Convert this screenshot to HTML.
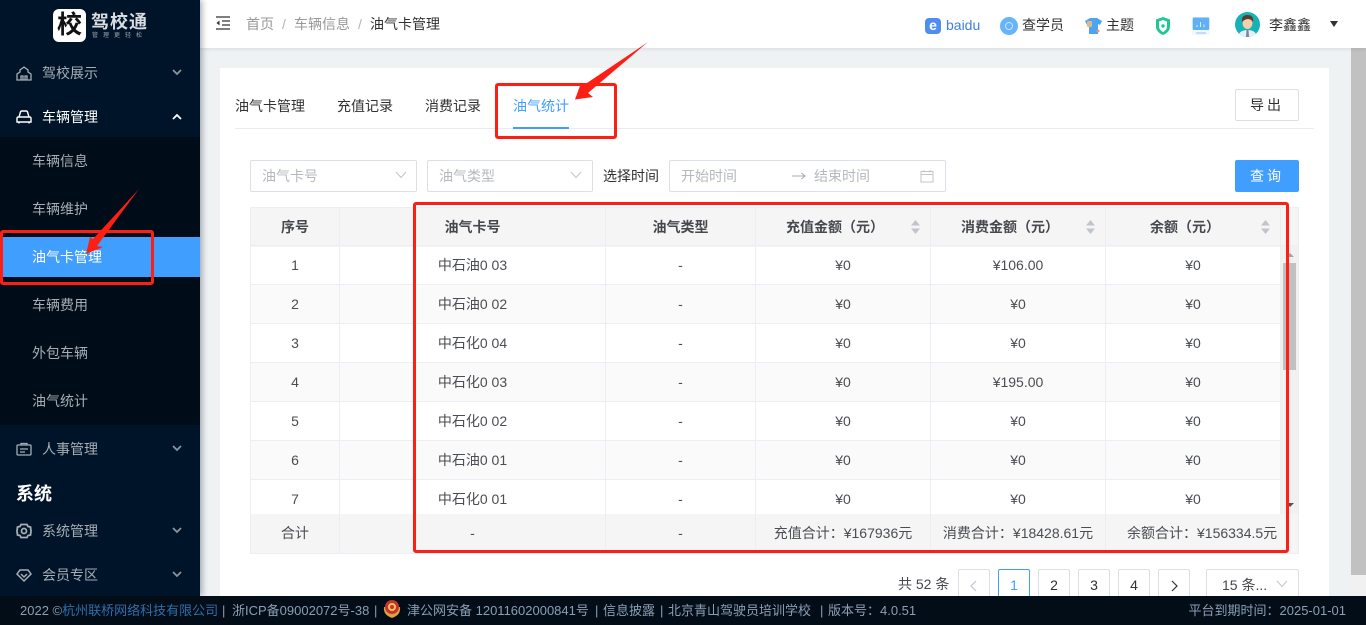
<!DOCTYPE html>
<html lang="zh-CN">
<head>
<meta charset="utf-8">
<title>油气卡管理</title>
<style>
*{box-sizing:border-box;margin:0;padding:0}
html,body{width:1366px;height:625px;overflow:hidden;background:#eff2f3;font-family:"Liberation Sans","Noto Sans CJK SC",sans-serif;font-size:14px;color:#303133}
.a{position:absolute;white-space:nowrap}
#side{position:absolute;left:0;top:0;width:200px;height:596px;background:#001429;box-shadow:2px 0 6px rgba(0,21,41,.35);z-index:3}
#sub{position:absolute;left:0;top:137px;width:200px;height:288px;background:#000c17}
.mi{position:absolute;left:42px;line-height:20px;color:#a6adb4;white-space:nowrap}
.si{position:absolute;left:32px;line-height:20px;color:#a6adb4;white-space:nowrap}
.ic{position:absolute;left:16px;width:16px;height:16px}
.ch{position:absolute;left:171px;width:12px;height:8px}
#head{position:absolute;left:200px;top:0;width:1166px;height:48px;background:#fff;box-shadow:0 1px 4px rgba(0,21,41,.1);z-index:2}
#card{position:absolute;left:220px;top:68px;width:1109px;height:540px;background:#fff}
.box{position:absolute;border:1px solid #dcdfe6;border-radius:2px;background:#fff;height:32px}
.ph{color:#b4b8bf}
table{border-collapse:separate;border-spacing:0;table-layout:fixed;position:absolute;left:0;top:0;width:1030px;font-size:14px;color:#4a4d52}
td{height:39px;line-height:20px;border-right:1px solid #ebeef5;border-bottom:1px solid #ebeef5;text-align:center;padding:0}
tr:nth-child(even) td{background:#fafafa}
#thead,#tfoot{position:absolute;left:251px;background:#f5f5f5;height:39px;width:1047px}
.hc{position:absolute;top:0;height:38px;line-height:38px;text-align:center;font-weight:bold;font-size:14px;color:#45484d;border-right:1px solid #ebeef5}
.hs{padding-right:16px}
.fc{position:absolute;top:0;height:39px;line-height:39px;text-align:center;font-size:14px;color:#4a4d52;border-right:1px solid #ebeef5;white-space:nowrap}
.sort{position:absolute;top:12px;width:9px;height:14px}
.pg{position:absolute;top:569px;width:32px;height:32px;border:1px solid #dcdfe6;border-radius:2px;background:#fff;text-align:center;line-height:31px;font-size:14px;color:#303133}
#foot{position:absolute;left:0;top:596px;width:1366px;height:29px;background:#020d18;z-index:4;color:#8a9fb3;font-size:13px;line-height:29px}
.rb{position:absolute;border:3px solid #fe1f14;border-radius:3px;z-index:6}
</style>
</head>
<body>

<div id="side">
  <div class="a" style="left:53px;top:9px;width:33px;height:33px;background:#fff;border-radius:6px;color:#111;font-size:25px;font-weight:bold;line-height:33px;text-align:center">校</div>
  <div class="a" style="left:91px;top:10px;font-size:18px;font-weight:bold;line-height:24px;color:#d9dde1;letter-spacing:1px">驾校通</div>
  <div class="a" style="left:92px;top:32px;font-size:6px;line-height:8px;color:#9aa4ae;letter-spacing:5px">管理更轻松</div>

  <svg class="ic" style="top:65px" viewBox="0 0 16 16" fill="none" stroke="#a6adb4" stroke-width="1.300"><path d="M1 15V9l3-2V5l4-3 4 3v2l3 2v6zM5 15v-4h2v4M9 15v-4h2v4"/></svg>
  <div class="mi" style="top:63px">驾校展示</div>
  <svg class="ch" style="top:68px" viewBox="0 0 12 8" fill="none" stroke="#8a939c" stroke-width="1.8"><path d="M2 2l4 4 4-4"/></svg>

  <svg class="ic" style="top:109px" viewBox="0 0 16 16" fill="none" stroke="#fff" stroke-width="1.400"><path d="M3 8l1.500-5q.3-1 1.300-1h4.400q1 0 1.300 1L13 8M2.500 8h11q1.500 0 1.500 1.500V13H1V9.500Q1 8 2.500 8zM3 13v1.500M13 13v1.500"/></svg>
  <div class="mi" style="top:107px;color:#fff">车辆管理</div>
  <svg class="ch" style="top:113px" viewBox="0 0 12 8" fill="none" stroke="#fff" stroke-width="1.8"><path d="M2 6l4-4 4 4"/></svg>

  <div id="sub"></div>
  <div class="si" style="top:151px">车辆信息</div>
  <div class="si" style="top:199px">车辆维护</div>
  <div class="a" style="left:0;top:237px;width:200px;height:40px;background:#409eff"></div>
  <div class="si" style="top:247px;color:#fff">油气卡管理</div>
  <div class="si" style="top:295px">车辆费用</div>
  <div class="si" style="top:343px">外包车辆</div>
  <div class="si" style="top:391px">油气统计</div>

  <svg class="ic" style="top:441px" viewBox="0 0 16 16" fill="none" stroke="#a6adb4" stroke-width="1.300"><path d="M2 4h12q1 0 1 1v8q0 1-1 1H2q-1 0-1-1V5q0-1 1-1zM5 4V2.500h6V4M4 8h8M4 11h5"/></svg>
  <div class="mi" style="top:439px">人事管理</div>
  <svg class="ch" style="top:444px" viewBox="0 0 12 8" fill="none" stroke="#8a939c" stroke-width="1.8"><path d="M2 2l4 4 4-4"/></svg>

  <div class="a" style="left:16px;top:482px;font-size:18px;font-weight:bold;line-height:24px;color:#fff">系统</div>

  <svg class="ic" style="top:523px" viewBox="0 0 16 16" fill="none" stroke="#a6adb4" stroke-width="1.800"><path d="M5 1.500h6l1 2 2.500.5L15 8l-.5 4-2.500.5-1 2H5l-1-2-2.500-.5L1 8l.5-4L4 3.500z"/><circle cx="8" cy="8" r="2.500"/></svg>
  <div class="mi" style="top:521px">系统管理</div>
  <svg class="ch" style="top:526px" viewBox="0 0 12 8" fill="none" stroke="#8a939c" stroke-width="1.8"><path d="M2 2l4 4 4-4"/></svg>

  <svg class="ic" style="top:567px" viewBox="0 0 16 16" fill="none" stroke="#a6adb4" stroke-width="1.500"><path d="M4 3h8l3 4-7 7-7-7zM5 7l3 3 3-3"/></svg>
  <div class="mi" style="top:565px">会员专区</div>
  <svg class="ch" style="top:570px" viewBox="0 0 12 8" fill="none" stroke="#8a939c" stroke-width="1.8"><path d="M2 2l4 4 4-4"/></svg>
</div>

<div id="head">
  <svg class="a" style="left:15px;top:15px;width:16px;height:16px" viewBox="0 0 16 16" fill="none" stroke="#303133" stroke-width="1.300"><path d="M1 2h14M7 6h8M7 10h8M1 14h14"/><path d="M4.500 5.500L1.500 8l3 2.500z" fill="#303133" stroke="none"/></svg>
  <div class="a" style="left:46px;top:14px;line-height:20px;color:#999">首页</div>
  <div class="a" style="left:82px;top:14px;line-height:20px;color:#b4b4b4">/</div>
  <div class="a" style="left:94px;top:14px;line-height:20px;color:#999">车辆信息</div>
  <div class="a" style="left:158px;top:14px;line-height:20px;color:#b4b4b4">/</div>
  <div class="a" style="left:170px;top:14px;line-height:20px;color:#303133">油气卡管理</div>

  <div class="a" style="left:725px;top:18px;width:16px;height:16px;border-radius:4px;background:#4f8ef0;color:#fff;font-size:14px;font-weight:bold;line-height:15px;text-align:center">e</div>
  <div class="a" style="left:746px;top:15px;line-height:20px;color:#3f7fe0">baidu</div>
  <svg class="a" style="left:800px;top:17px;width:18px;height:18px" viewBox="0 0 18 18"><circle cx="9" cy="9" r="9" fill="#66b5fb"/><circle cx="9" cy="9" r="3.500" fill="none" stroke="#c9e5fd" stroke-width="1"/></svg>
  <div class="a" style="left:822px;top:15px;line-height:20px">查学员</div>
  <svg class="a" style="left:885px;top:18px;width:17px;height:16px" viewBox="0 0 17 16"><path d="M5 0h7l5 3-2 4-2-1v10H4V6L2 7 0 3z" fill="#4aa6f5"/><rect x="2" y="3" width="5" height="6" rx="1" fill="#e0b987"/><circle cx="13" cy="13" r="1.500" fill="#f58a7c"/></svg>
  <div class="a" style="left:906px;top:15px;line-height:20px">主题</div>
  <svg class="a" style="left:955px;top:17px;width:16px;height:18px" viewBox="0 0 16 18"><path d="M8 0l7 2.500v7Q15 15 8 18 1 15 1 9.500v-7z" fill="#1fc792"/><path d="M8 3l4 1.500v5Q12 13 8 15 4 13 4 9.500v-5z" fill="#fff"/><circle cx="8" cy="9" r="1.700" fill="#1fc792"/></svg>
  <svg class="a" style="left:992px;top:17px;width:18px;height:18px" viewBox="0 0 18 18"><rect width="18" height="18" fill="#f3f7fb"/><rect y="0.500" width="16.500" height="12.500" x="0.700" rx="1" fill="#5fb0f7"/><path d="M5 10V8M8.500 10V5M12 10V7.500" stroke="#dceefe" stroke-width="1"/><path d="M4 16h10" stroke="#8cc6f9" stroke-width="1"/></svg>
  <svg class="a" style="left:1035px;top:12px;width:25px;height:25px" viewBox="0 0 25 25"><defs><clipPath id="av"><circle cx="12.500" cy="12.500" r="12.500"/></clipPath></defs><g clip-path="url(#av)"><rect width="25" height="25" fill="#16b2b8"/><path d="M3 25q1-7 9.500-7T22 25z" fill="#e8eef2"/><path d="M11.500 18h2l.5 7h-3z" fill="#6d8aa5"/><ellipse cx="12.500" cy="11" rx="5" ry="6" fill="#f4cfae"/><path d="M7 10q-1-7 5.500-7T18 10q-2-3-5-3t-6 3z" fill="#5a3d2a"/></g></svg>
  <div class="a" style="left:1069px;top:15px;line-height:20px">李鑫鑫</div>
  <div class="a" style="left:1130px;top:21px;width:0;height:0;border-left:4.500px solid transparent;border-right:4.500px solid transparent;border-top:6px solid #303133"></div>
</div>

<div class="a" style="left:1351px;top:48px;width:15px;height:527px;background:#c1c1c1"></div>
<div class="a" style="left:1351px;top:575px;width:15px;height:21px;background:#f1f1f1"></div>

<div id="card"></div>

<div class="a" style="left:235px;top:96px;line-height:20px">油气卡管理</div>
<div class="a" style="left:337px;top:96px;line-height:20px">充值记录</div>
<div class="a" style="left:425px;top:96px;line-height:20px">消费记录</div>
<div class="a" style="left:513px;top:96px;line-height:20px;color:#409eff">油气统计</div>
<div class="a" style="left:235px;top:128px;width:1079px;height:1px;background:#e9ebef"></div>
<div class="a" style="left:513px;top:127px;width:56px;height:2px;background:#409eff"></div>

<div class="box" style="left:1235px;top:89px;width:64px;text-align:center;line-height:30px;letter-spacing:3px">导出</div>

<div class="box ph" style="left:250px;top:160px;width:167px;line-height:30px;padding-left:11px">油气卡号</div>
<svg class="a" style="left:395px;top:171px;width:12px;height:8px" viewBox="0 0 12 8" fill="none" stroke="#c0c4cc" stroke-width="1"><path d="M1 1l5 5.500L11 1"/></svg>
<div class="box ph" style="left:427px;top:160px;width:166px;line-height:30px;padding-left:11px">油气类型</div>
<svg class="a" style="left:570px;top:171px;width:12px;height:8px" viewBox="0 0 12 8" fill="none" stroke="#c0c4cc" stroke-width="1"><path d="M1 1l5 5.500L11 1"/></svg>
<div class="a" style="left:603px;top:166px;line-height:20px">选择时间</div>
<div class="box" style="left:669px;top:160px;width:277px"></div>
<div class="a ph" style="left:681px;top:166px;line-height:20px">开始时间</div>
<svg class="a" style="left:792px;top:171px;width:14px;height:10px" viewBox="0 0 14 10" fill="none" stroke="#a8abb2" stroke-width="1"><path d="M0 5h13M9.500 2L13 5 9.500 8"/></svg>
<div class="a ph" style="left:814px;top:166px;line-height:20px">结束时间</div>
<svg class="a" style="left:920px;top:169px;width:14px;height:14px" viewBox="0 0 14 14" fill="none" stroke="#c0c4cc" stroke-width="1"><path d="M1 2.500h12v10.500H1zM1 5.500h12M4 1v2.500M10 1v2.500"/></svg>
<div class="a" style="left:1235px;top:160px;width:64px;height:32px;background:#409eff;border-radius:2px;color:#fff;text-align:center;line-height:32px;letter-spacing:3px">查询</div>

<!-- table -->
<div class="a" style="left:250px;top:207px;width:1049px;height:347px;border:1px solid #ebeef5;background:#fff"></div>
<div id="thead" style="top:208px">
  <div class="hc" style="left:0;width:89px">序号</div>
  <div class="hc" style="left:89px;width:266px;padding-right:0">油气卡号</div>
  <div class="hc" style="left:355px;width:150px">油气类型</div>
  <div class="hc hs" style="left:505px;width:175px">充值金额（元）</div>
  <div class="hc hs" style="left:680px;width:175px">消费金额（元）</div>
  <div class="hc hs" style="left:855px;width:175px">余额（元）</div>
  <svg class="sort" style="left:660px" viewBox="0 0 9 14" fill="#c0c4cc"><path d="M4.500 0L9 5.500H0zM4.500 14L0 8.500h9z"/></svg>
  <svg class="sort" style="left:835px" viewBox="0 0 9 14" fill="#c0c4cc"><path d="M4.500 0L9 5.500H0zM4.500 14L0 8.500h9z"/></svg>
  <svg class="sort" style="left:1010px" viewBox="0 0 9 14" fill="#c0c4cc"><path d="M4.500 0L9 5.500H0zM4.500 14L0 8.500h9z"/></svg>
</div>
<div class="a" style="left:251px;top:245px;width:1047px;height:1px;background:#ebeef5"></div>
<div class="a" style="left:251px;top:246px;width:1030px;height:268px;overflow:hidden">
<table>
<colgroup><col style="width:89px"><col style="width:266px"><col style="width:150px"><col style="width:175px"><col style="width:175px"><col style="width:175px"></colgroup>
<tr><td>1</td><td>中石油0 03</td><td>-</td><td>¥0</td><td>¥106.00</td><td>¥0</td></tr>
<tr><td>2</td><td>中石油0 02</td><td>-</td><td>¥0</td><td>¥0</td><td>¥0</td></tr>
<tr><td>3</td><td>中石化0 04</td><td>-</td><td>¥0</td><td>¥0</td><td>¥0</td></tr>
<tr><td>4</td><td>中石化0 03</td><td>-</td><td>¥0</td><td>¥195.00</td><td>¥0</td></tr>
<tr><td>5</td><td>中石化0 02</td><td>-</td><td>¥0</td><td>¥0</td><td>¥0</td></tr>
<tr><td>6</td><td>中石油0 01</td><td>-</td><td>¥0</td><td>¥0</td><td>¥0</td></tr>
<tr><td>7</td><td>中石化0 01</td><td>-</td><td>¥0</td><td>¥0</td><td>¥0</td></tr>
</table>
</div>
<div class="a" style="left:1281px;top:246px;width:17px;height:268px;background:#f1f1f1"></div>
<div class="a" style="left:1283px;top:263px;width:13px;height:107px;background:#c1c1c1"></div>
<div class="a" style="left:1286px;top:253px;width:0;height:0;border-left:4px solid transparent;border-right:4px solid transparent;border-bottom:4px solid #a3a3a3"></div>
<div class="a" style="left:1286px;top:503px;width:0;height:0;border-left:4px solid transparent;border-right:4px solid transparent;border-top:4px solid #505050"></div>
<div id="tfoot" style="top:514px">
  <div class="fc" style="left:0;width:89px">合计</div>
  <div class="fc" style="left:89px;width:266px">-</div>
  <div class="fc" style="left:355px;width:150px">-</div>
  <div class="fc" style="left:505px;width:175px">充值合计：¥167936元</div>
  <div class="fc" style="left:680px;width:175px">消费合计：¥18428.61元</div>
  <div class="fc" style="left:855px;width:192px;border-right:0;text-align:left;padding-left:21px">余额合计：¥156334.5元</div>
</div>

<!-- pagination -->
<div class="a" style="left:898px;top:574px;line-height:20px;color:#45484d">共 52 条</div>
<div class="pg" style="left:958px"><svg width="10" height="12" viewBox="0 0 10 12" fill="none" stroke="#c0c4cc" stroke-width="1.200" style="margin-top:10px"><path d="M7 1L2 6l5 5"/></svg></div>
<div class="pg" style="left:998px;border-color:#409eff;color:#409eff">1</div>
<div class="pg" style="left:1038px">2</div>
<div class="pg" style="left:1078px">3</div>
<div class="pg" style="left:1118px">4</div>
<div class="pg" style="left:1158px"><svg width="10" height="12" viewBox="0 0 10 12" fill="none" stroke="#303133" stroke-width="1.200" style="margin-top:10px"><path d="M3 1l5 5-5 5"/></svg></div>
<div class="box" style="left:1206px;top:569px;width:93px;padding-left:15px;line-height:30px;color:#45484d">15 条...</div>
<svg class="a" style="left:1276px;top:580px;width:12px;height:8px" viewBox="0 0 12 8" fill="none" stroke="#c0c4cc" stroke-width="1"><path d="M1 1l5 5.500L11 1"/></svg>

<!-- footer -->
<div id="foot">
  <div class="a" style="left:20px;top:0">2022 ©<span style="color:#2f6fae">杭州联桥网络科技有限公司</span></div>
  <div class="a" style="left:222px;top:0">|</div>
  <div class="a" style="left:232px;top:0">浙ICP备09002072号-38</div>
  <div class="a" style="left:374px;top:0">|</div>
  <svg class="a" style="left:383px;top:3px;width:18px;height:20px" viewBox="0 0 18 20"><path d="M1 8Q0 16 9 19 18 16 17 8z" fill="#d9a441"/><circle cx="9" cy="8" r="7" fill="#c8342b"/><circle cx="9" cy="8" r="4" fill="#e9c35a"/><circle cx="9" cy="8" r="2" fill="#c8342b"/></svg>
  <div class="a" style="left:407px;top:0">津公网安备 12011602000841号</div>
  <div class="a" style="left:595px;top:0">|</div>
  <div class="a" style="left:603px;top:0">信息披露</div>
  <div class="a" style="left:660px;top:0">|</div>
  <div class="a" style="left:668px;top:0">北京青山驾驶员培训学校</div>
  <div class="a" style="left:820px;top:0">|</div>
  <div class="a" style="left:828px;top:0">版本号：4.0.51</div>
  <div class="a" style="right:20px;top:0">平台到期时间：2025-01-01</div>
</div>

<!-- annotation overlays -->
<div class="rb" style="left:495px;top:83px;width:122px;height:56px"></div>
<div class="rb" style="left:0;top:230px;width:154px;height:55px"></div>
<div class="rb" style="left:413px;top:202px;width:876px;height:351px"></div>
<svg class="a" style="left:0;top:0;width:1366px;height:625px;z-index:7;pointer-events:none" viewBox="0 0 1366 625">
  <polygon points="648,42 588,93 593,97 575,99.500 581,83 584,85" fill="#fe1f14"/>
  <polygon points="139,189 97,246 103,247 86,254 90,237 93,239" fill="#fe1f14"/>
</svg>
</body>
</html>
